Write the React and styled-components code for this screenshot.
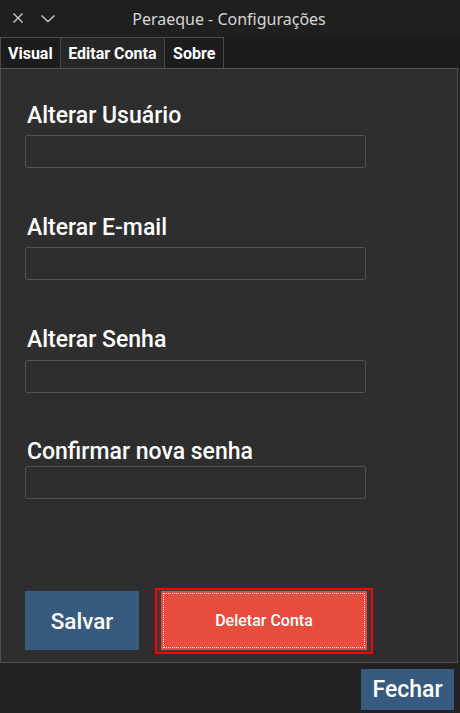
import React from "react";
import styled, { createGlobalStyle } from "styled-components";

const Global = createGlobalStyle`
  html, body { margin: 0; padding: 0; background: #222222; }
  body { font-family: Roboto, "Noto Sans", sans-serif; }
  * { box-sizing: border-box; }
`;

const Window = styled.div`
  width: 460px;
  height: 713px;
  display: flex;
  flex-direction: column;
  background: #222222;
  overflow: hidden;
`;

const TitleBar = styled.div`
  position: relative;
  height: 37px;
  flex: none;
  background: #1f1f1f;
  display: flex;
  align-items: center;
  justify-content: center;
`;

const TitleControls = styled.div`
  position: absolute;
  left: 12px;
  top: 12px;
  display: flex;
  align-items: center;
  gap: 16px;
`;

const Title = styled.div`
  font-family: "Noto Sans", sans-serif;
  font-size: 16px;
  color: #d6d6d6;
  margin-left: -2px;
`;

const TabBar = styled.div`
  height: 31px;
  flex: none;
  display: flex;
  background: #1c1c1c;
`;

const Tab = styled.div`
  height: 31px;
  padding: 0 ${(p) => p.$pad}px;
  display: flex;
  align-items: center;
  font-family: Roboto, sans-serif;
  font-weight: 700;
  font-size: 16px;
  color: #ffffff;
  background: ${(p) => (p.$active ? "#262626" : "#1c1c1c")};
  border: 1px solid #4a4a4a;
  border-bottom: none;
  margin-left: -1px;
  &:first-child { margin-left: 0; }
`;

const Panel = styled.div`
  flex: none;
  height: 595px;
  margin-right: 2px;
  border: 1px solid #525252;
  background: #2e2e2e;
  display: flex;
  flex-direction: column;
  padding: 35px 0 8px 24px;
`;

const Field = styled.div`
  display: flex;
  flex-direction: column;
  margin-top: ${(p) => p.$top}px;
`;

const Label = styled.label`
  font-family: Roboto, sans-serif;
  font-weight: 500;
  font-size: 23px;
  line-height: 24px;
  height: 24px;
  color: #ffffff;
  padding-left: 2px;
  margin-bottom: ${(p) => p.$gap}px;
`;

const Input = styled.input`
  width: 341px;
  height: 33px;
  background: #2e2e2e;
  border: 1px solid #505050;
  border-radius: 2px;
  outline: none;
  color: #fff;
  font-family: Roboto, sans-serif;
  font-size: 15px;
  padding: 0 6px;
`;

const Actions = styled.div`
  margin-top: auto;
  display: flex;
  align-items: flex-start;
  gap: 16px;
`;

const PrimaryButton = styled.button`
  background: #375a7f;
  color: #ffffff;
  border: none;
  font-family: Roboto, sans-serif;
  font-weight: 500;
  font-size: ${(p) => p.$size}px;
  width: ${(p) => p.$w}px;
  height: ${(p) => p.$h}px;
  margin-top: ${(p) => p.$mt || 0}px;
  padding: 0;
  cursor: pointer;
`;

const FocusRing = styled.div`
  border: 2px solid #ff0000;
  background: #3a3a3a;
  padding: 1px 4px 2px 4px;
`;

const DangerButton = styled.button`
  width: 206px;
  height: 59px;
  background: #e74c3c;
  color: #ffffff;
  border: none;
  padding: 2px;
  font-family: Roboto, sans-serif;
  font-weight: 500;
  font-size: 16px;
  display: flex;
  cursor: pointer;
`;

const DottedInner = styled.span`
  flex: 1;
  border: 1px dotted #ffffff;
  display: flex;
  align-items: center;
  justify-content: center;
`;

const Footer = styled.div`
  flex: 1;
  display: flex;
  justify-content: flex-end;
  padding: 6px 6px 0 0;
  background: #222222;
`;

const CloseIcon = () => (
  <svg width="12" height="12" viewBox="0 0 12 12">
    <path d="M1.5 1.5 L10.5 10.5 M10.5 1.5 L1.5 10.5" stroke="#cfcfcf" strokeWidth="1.3" fill="none" />
  </svg>
);

const ChevronIcon = () => (
  <svg width="16" height="12" viewBox="0 0 16 12">
    <path d="M1.5 3.5 L8 9.5 L14.5 3.5" stroke="#cfcfcf" strokeWidth="1.3" fill="none" />
  </svg>
);

const fields = [
  { label: "Alterar Usuário", top: 0, gap: 7 },
  { label: "Alterar E-mail", top: 48, gap: 7 },
  { label: "Alterar Senha", top: 48, gap: 8 },
  { label: "Confirmar nova senha", top: 47, gap: 2 },
];

export default function App() {
  return (
    <>
      <Global />
      <Window>
        <TitleBar>
          <TitleControls>
            <CloseIcon />
            <ChevronIcon />
          </TitleControls>
          <Title>Peraeque - Configurações</Title>
        </TitleBar>
        <TabBar>
          <Tab $pad={7}>Visual</Tab>
          <Tab $pad={7.5} $active>Editar Conta</Tab>
          <Tab $pad={8}>Sobre</Tab>
        </TabBar>
        <Panel>
          {fields.map((f) => (
            <Field key={f.label} $top={f.top}>
              <Label $gap={f.gap}>{f.label}</Label>
              <Input type="text" />
            </Field>
          ))}
          <Actions>
            <PrimaryButton $w={114} $h={59} $size={22.5} $mt={3}>Salvar</PrimaryButton>
            <FocusRing>
              <DangerButton>
                <DottedInner>Deletar Conta</DottedInner>
              </DangerButton>
            </FocusRing>
          </Actions>
        </Panel>
        <Footer>
          <PrimaryButton $w={93} $h={41} $size={23}>Fechar</PrimaryButton>
        </Footer>
      </Window>
    </>
  );
}
